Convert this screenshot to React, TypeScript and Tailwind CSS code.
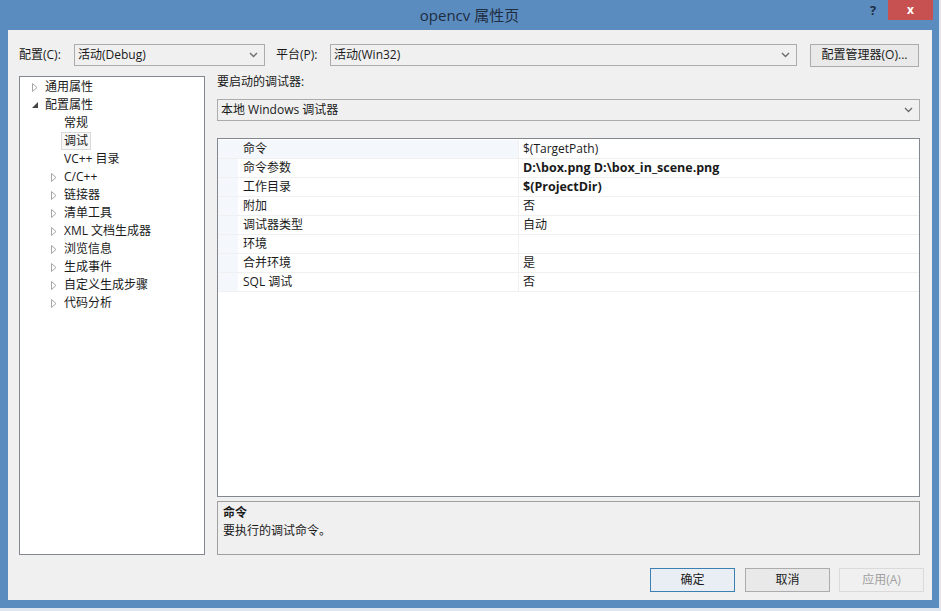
import React from "react";

const FONT = '"Open Sans", "Noto Sans CJK SC", sans-serif';

function Chevron() {
  return (
    <svg width="9" height="6" viewBox="0 0 9 6" className="shrink-0">
      <path d="M1 1 L4.5 4.5 L8 1" fill="none" stroke="#6d6d6d" strokeWidth="1.4" />
    </svg>
  );
}

function Collapsed() {
  return (
    <svg width="6" height="9" viewBox="0 0 6 9" className="shrink-0">
      <path d="M0.5 0.5 L5 4.5 L0.5 8.5 Z" fill="none" stroke="#a6a6a6" strokeWidth="1" />
    </svg>
  );
}

function Expanded() {
  return (
    <svg width="6" height="6" viewBox="0 0 6 6" className="shrink-0">
      <path d="M6 0 L6 6 L0 6 Z" fill="#444" />
    </svg>
  );
}

function Select({ text, w }: { text: string; w: string }) {
  return (
    <div className={`${w} h-[22px] border border-[#acacac] bg-[#f0f0f0] flex items-center justify-between pl-[3px] pr-[6px]`}>
      <span>{text}</span>
      <Chevron />
    </div>
  );
}

type TreeItem = { label: string; level: number; icon: "c" | "e" | "n"; selected?: boolean };

const tree: TreeItem[] = [
  { label: "通用属性", level: 0, icon: "c" },
  { label: "配置属性", level: 0, icon: "e" },
  { label: "常规", level: 1, icon: "n" },
  { label: "调试", level: 1, icon: "n", selected: true },
  { label: "VC++ 目录", level: 1, icon: "n" },
  { label: "C/C++", level: 1, icon: "c" },
  { label: "链接器", level: 1, icon: "c" },
  { label: "清单工具", level: 1, icon: "c" },
  { label: "XML 文档生成器", level: 1, icon: "c" },
  { label: "浏览信息", level: 1, icon: "c" },
  { label: "生成事件", level: 1, icon: "c" },
  { label: "自定义生成步骤", level: 1, icon: "c" },
  { label: "代码分析", level: 1, icon: "c" },
];

const props: { name: string; value: string; bold?: boolean }[] = [
  { name: "命令", value: "$(TargetPath)" },
  { name: "命令参数", value: "D:\\box.png D:\\box_in_scene.png", bold: true },
  { name: "工作目录", value: "$(ProjectDir)", bold: true },
  { name: "附加", value: "否" },
  { name: "调试器类型", value: "自动" },
  { name: "环境", value: "" },
  { name: "合并环境", value: "是" },
  { name: "SQL 调试", value: "否" },
];

export default function App() {
  return (
    <div className="w-[941px] h-[611px] bg-[#dfe6ef] overflow-hidden text-[12px] text-[#1a1a1a]" style={{ fontFamily: FONT }}>
      <div className="w-[939px] h-[608px] bg-[#5b8cc0] flex flex-col">
        {/* Title bar */}
        <div className="h-[30px] flex items-start relative">
          <div className="flex-1 h-[30px] flex items-center justify-center text-[15px] text-[#1f2d40] pt-[1px]">opencv 属性页</div>
          <div className="absolute left-[870px] top-[1px] text-[13px] font-bold text-[#1f2d40]">?</div>
          <div className="absolute left-[888px] top-0 w-[45px] h-[20px] bg-[#c75050] flex items-center justify-center text-white text-[12px] font-bold">x</div>
        </div>
        {/* Content */}
        <div className="ml-[8px] mr-[7px] h-[570px] bg-[#f0f0f0] flex flex-col px-[11px]">
          {/* row 1 */}
          <div className="mt-[14px] h-[22px] flex items-center">
            <span className="w-[55px]">配置(C):</span>
            <Select text="活动(Debug)" w="w-[191px]" />
            <span className="ml-[11px] w-[54px]">平台(P):</span>
            <Select text="活动(Win32)" w="w-[467px]" />
            <div className="ml-[13px] w-[109px] h-[23px] border border-[#acacac] bg-[#e9e9e9] flex items-center justify-center">配置管理器(O)...</div>
          </div>
          {/* main */}
          <div className="mt-[10px] h-[479px] flex">
            <div className="w-[186px] h-full bg-white border border-[#828790] pt-[1px]">
              {tree.map((t) => (
                <div key={t.label} className="h-[18px] flex items-center">
                  <div className={`${t.level === 0 ? "w-[25px]" : "w-[44px]"} flex justify-end pr-[7px]`}>
                    {t.icon === "c" ? <Collapsed /> : t.icon === "e" ? <Expanded /> : null}
                  </div>
                  <span className={t.selected ? "border border-[#d9d9d9] bg-[#f7f7f7] px-[2px] -ml-[3px] leading-[16px]" : ""}>{t.label}</span>
                </div>
              ))}
            </div>
            <div className="ml-[12px] w-[703px] h-full flex flex-col">
              <div className="h-[13px] leading-[13px] mt-[-1px]">要启动的调试器:</div>
              <div className="mt-[11px]">
                <Select text="本地 Windows 调试器" w="w-[703px]" />
              </div>
              <div className="mt-[17px] h-[359px] bg-white border border-[#828790] flex flex-col pt-[1px]">
                {props.map((p, i) => (
                  <div key={p.name} className="h-[19px] flex border-b border-[#f0f0f0]">
                    <div className="w-[20px] bg-[#f4f7fb]" />
                    <div className={`w-[281px] pl-[5px] flex items-center border-r border-[#f0f0f0] ${i === 0 ? "bg-[#f4f7fb]" : ""}`}>{p.name}</div>
                    <div className={`flex-1 pl-[4px] flex items-center ${p.bold ? "font-bold text-[12.5px]" : ""}`}>{p.value}</div>
                  </div>
                ))}
              </div>
              <div className="mt-[4px] flex-1 border border-[#a0a0a0] bg-[#f0f0f0] px-[5px] pt-[2px] leading-[18px]">
                <div className="font-bold">命令</div>
                <div>要执行的调试命令。</div>
              </div>
            </div>
          </div>
          {/* buttons */}
          <div className="mt-[13px] h-[23px] flex justify-end mr-[-3px]">
            <div className="w-[85px] h-[24px] border border-[#3c7fb1] bg-[#e9eef4] flex items-center justify-center">确定</div>
            <div className="ml-[10px] w-[85px] h-[24px] border border-[#acacac] bg-[#e9e9e9] flex items-center justify-center">取消</div>
            <div className="ml-[9px] w-[85px] h-[24px] border border-[#dadada] bg-[#f0f0f0] flex items-center justify-center text-[#a0a0a0]">应用(A)</div>
          </div>
        </div>
      </div>
    </div>
  );
}
